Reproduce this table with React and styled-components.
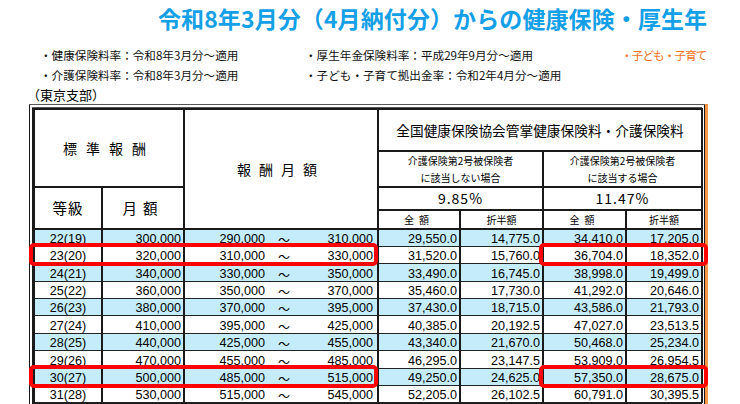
import React from 'react';
import styled, { createGlobalStyle } from 'styled-components';

const GlobalStyle = createGlobalStyle`
    html, body {
        margin: 0;
        padding: 0;
        background: #fff;
    }
    body {
        font-family: "Noto Sans CJK JP", "Liberation Sans", sans-serif;
        color: #000;
    }
`;

const ROW_H = 17.4;
const HEAD_H = 123; // from frame top to first data row

const rows = [
    ['22(19)', '300,000', '290,000', '310,000', '29,550.0', '14,775.0', '34,410.0', '17,205.0'],
    ['23(20)', '320,000', '310,000', '330,000', '31,520.0', '15,760.0', '36,704.0', '18,352.0'],
    ['24(21)', '340,000', '330,000', '350,000', '33,490.0', '16,745.0', '38,998.0', '19,499.0'],
    ['25(22)', '360,000', '350,000', '370,000', '35,460.0', '17,730.0', '41,292.0', '20,646.0'],
    ['26(23)', '380,000', '370,000', '395,000', '37,430.0', '18,715.0', '43,586.0', '21,793.0'],
    ['27(24)', '410,000', '395,000', '425,000', '40,385.0', '20,192.5', '47,027.0', '23,513.5'],
    ['28(25)', '440,000', '425,000', '455,000', '43,340.0', '21,670.0', '50,468.0', '25,234.0'],
    ['29(26)', '470,000', '455,000', '485,000', '46,295.0', '23,147.5', '53,909.0', '26,954.5'],
    ['30(27)', '500,000', '485,000', '515,000', '49,250.0', '24,625.0', '57,350.0', '28,675.0'],
    ['31(28)', '530,000', '515,000', '545,000', '52,205.0', '26,102.5', '60,791.0', '30,395.5'],
];

const highlighted = [1, 8];

const Page = styled.div`
    width: 708px;
    height: 404px;
    overflow: hidden;
`;

const Title = styled.h1`
    margin: 0;
    padding: 5px 0 0 158px;
    height: 38px;
    box-sizing: border-box;
    font-size: 23px;
    font-weight: 700;
    line-height: 26px;
    color: #14a0e6;
    white-space: nowrap;
    letter-spacing: 0.1px;
`;

const Notes = styled.div`
    display: grid;
    grid-template-columns: 265px 316px auto;
    padding: 7px 0 0 40px;
    font-size: 11.6px;
    line-height: 20px;
    white-space: nowrap;
`;

const Note = styled.span`
    color: ${p => (p.accent ? '#f07020' : '#111')};
    letter-spacing: ${p => (p.accent ? -0.9 : 0)}px;
`;

const Branch = styled.div`
    padding: 1px 0 0 27px;
    font-size: 13px;
    line-height: 17px;
    height: 18px;
`;

const TableArea = styled.div`
    position: relative;
    margin-left: 29px;
    width: 676px;
`;

const Frame = styled.div`
    border: 4px double #1a1a1a;
    border-top-color: #555;
    box-shadow: 3px 0 0 0 #f79646;
`;

const Table = styled.table`
    width: 668px;
    table-layout: fixed;
    border-collapse: collapse;
`;

const HeadRow = styled.tr`
    height: ${p => p.h}px;
`;

const Th = styled.th`
    border: 2px solid #1a1a1a;
    font-weight: 400;
    font-size: ${p => p.size || 14}px;
    letter-spacing: ${p => p.spacing || 0}px;
    line-height: ${p => p.lh || 1.2};
    padding: 0;
    text-align: center;
    vertical-align: middle;
    white-space: nowrap;
    background: #fff;
`;

const DataRow = styled.tr`
    height: ${ROW_H}px;
    background: ${p => (p.shaded ? '#c4ecfb' : '#fff')};
`;

const Td = styled.td`
    border-left: 2px solid #1a1a1a;
    border-right: 2px solid #1a1a1a;
    border-top: 1px solid #222;
    border-bottom: 1px solid #222;
    padding: 0 ${p => (p.center ? 0 : 2)}px 0 0;
    font-family: "Liberation Sans", "Noto Sans CJK JP", sans-serif;
    font-size: 12.6px;
    line-height: 13px;
    text-align: ${p => (p.center ? 'center' : 'right')};
    vertical-align: bottom;
    white-space: nowrap;
    overflow: hidden;
`;

const Range = styled.div`
    display: grid;
    grid-template-columns: 80px 38px 1fr;
    align-items: end;
`;

const RangeFrom = styled.span`
    text-align: right;
`;

const Tilde = styled.span`
    text-align: center;
    font-family: "Noto Sans CJK JP", sans-serif;
    font-size: 12px;
`;

const RangeTo = styled.span`
    text-align: right;
    padding-right: 2px;
`;

const Highlight = styled.div`
    position: absolute;
    top: ${p => HEAD_H - 1 + p.row * ROW_H}px;
    left: ${p => p.left}px;
    width: ${p => p.width}px;
    height: ${ROW_H + 5}px;
    box-sizing: border-box;
    border: 4px solid #ff0000;
    border-radius: 5px;
    pointer-events: none;
`;

const App = () => {
    return (
        <Page>
            <GlobalStyle />
            <Title>令和8年3月分（4月納付分）からの健康保険・厚生年</Title>
            <Notes>
                <Note>・健康保険料率：令和8年3月分～適用</Note>
                <Note>・厚生年金保険料率：平成29年9月分～適用</Note>
                <Note accent>・子ども・子育て</Note>
                <Note>・介護保険料率：令和8年3月分～適用</Note>
                <Note>・子ども・子育て拠出金率：令和2年4月分～適用</Note>
                <Note />
            </Notes>
            <Branch>（東京支部）</Branch>
            <TableArea>
                <Frame>
                    <Table>
                        <colgroup>
                            <col style={{ width: 68 }} />
                            <col style={{ width: 82 }} />
                            <col style={{ width: 194 }} />
                            <col style={{ width: 82 }} />
                            <col style={{ width: 83 }} />
                            <col style={{ width: 83 }} />
                            <col style={{ width: 76 }} />
                        </colgroup>
                        <thead>
                            <HeadRow h={42}>
                                <Th colSpan={2} rowSpan={2} spacing={9}>標準報酬</Th>
                                <Th rowSpan={4} spacing={8}>報酬月額</Th>
                                <Th colSpan={4} size={13.7}>全国健康保険協会管掌健康保険料・介護保険料</Th>
                            </HeadRow>
                            <HeadRow h={35}>
                                <Th colSpan={2} size={10} lh={1.7}>介護保険第2号被保険者<br />に該当しない場合</Th>
                                <Th colSpan={2} size={10} lh={1.7}>介護保険第2号被保険者<br />に該当する場合</Th>
                            </HeadRow>
                            <HeadRow h={23}>
                                <Th rowSpan={2} size={14.5} spacing={1}>等級</Th>
                                <Th rowSpan={2} size={14.5} spacing={6}>月額</Th>
                                <Th colSpan={2} size={14} spacing={1}>9.85%</Th>
                                <Th colSpan={2} size={14} spacing={1}>11.47%</Th>
                            </HeadRow>
                            <HeadRow h={19}>
                                <Th size={10} spacing={5}>全額</Th>
                                <Th size={10}>折半額</Th>
                                <Th size={10} spacing={5}>全額</Th>
                                <Th size={10}>折半額</Th>
                            </HeadRow>
                        </thead>
                        <tbody>
                            {rows.map((r, i) => (
                                <DataRow key={r[0]} shaded={i % 2 === 0}>
                                    <Td center>{r[0]}</Td>
                                    <Td>{r[1]}</Td>
                                    <Td>
                                        <Range>
                                            <RangeFrom>{r[2]}</RangeFrom>
                                            <Tilde>～</Tilde>
                                            <RangeTo>{r[3]}</RangeTo>
                                        </Range>
                                    </Td>
                                    <Td>{r[4]}</Td>
                                    <Td>{r[5]}</Td>
                                    <Td>{r[6]}</Td>
                                    <Td>{r[7]}</Td>
                                </DataRow>
                            ))}
                        </tbody>
                    </Table>
                </Frame>
                {highlighted.map(i => (
                    <React.Fragment key={i}>
                        <Highlight row={i} left={0} width={349} />
                        <Highlight row={i} left={510} width={169} />
                    </React.Fragment>
                ))}
            </TableArea>
        </Page>
    );
};

export default App;
